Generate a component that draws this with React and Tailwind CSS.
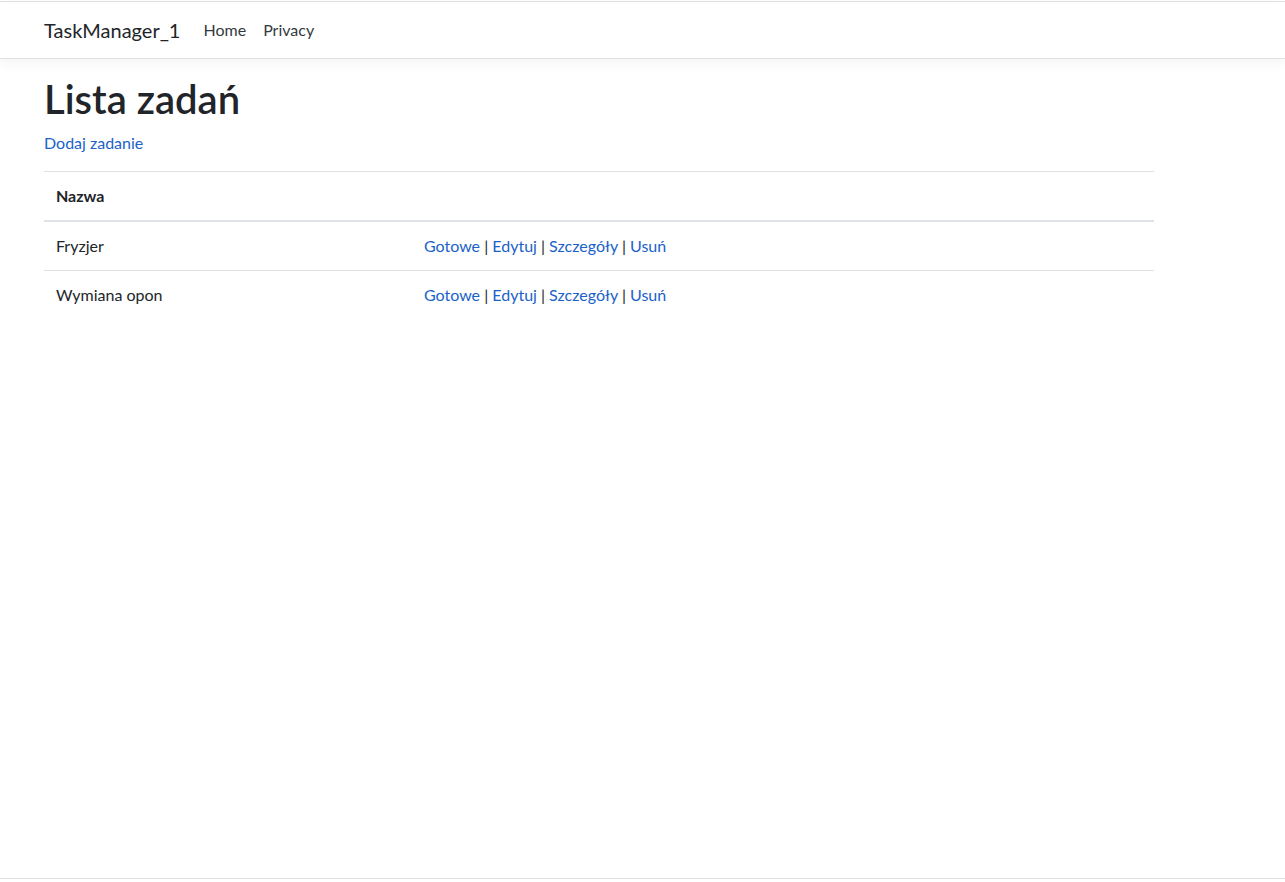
import React from "react";

const rows = ["Fryzjer", "Wymiana opon"];

function Actions() {
  const links = ["Gotowe", "Edytuj", "Szczegóły", "Usuń"];
  return (
    <span>
      {links.map((l, i) => (
        <React.Fragment key={l}>
          <a href="#" className="text-[#1a62c9] hover:underline">{l}</a>
          {i < links.length - 1 && <span> | </span>}
        </React.Fragment>
      ))}
    </span>
  );
}

export default function App() {
  return (
    <div
      className="min-h-screen flex flex-col bg-white text-[#212529] text-[16px] leading-[1.5]"
      style={{ fontFamily: '"Segoe UI", Lato, "Open Sans", sans-serif' }}
    >
      <div className="h-px bg-white" />
      <header className="border-t border-b border-[#dee2e6] bg-white shadow-[0_4px_12px_rgba(0,0,0,0.05)] mb-4">
        <nav className="h-[56px] flex items-center px-[44px]">
          <a href="#" className="text-[20px] leading-[30px] text-[#212529] mr-[23px]">TaskManager_1</a>
          <a href="#" className="text-[#343a40] mr-[17px]">Home</a>
          <a href="#" className="text-[#343a40]">Privacy</a>
        </nav>
      </header>
      <main className="flex-1 px-[44px]">
        <div className="w-[1110px]">
          <h1 className="text-[40px] leading-[48px] font-semibold mb-2">Lista zadań</h1>
          <p className="mb-4">
            <a href="#" className="text-[#1a62c9]">Dodaj zadanie</a>
          </p>
          <table className="w-full border-collapse table-fixed">
            <colgroup>
              <col className="w-[368px]" />
              <col />
            </colgroup>
            <thead>
              <tr className="border-t border-[#dee2e6]">
                <th className="text-left font-bold p-3 border-b-2 border-[#dee2e6]">Nazwa</th>
                <th className="p-3 border-b-2 border-[#dee2e6]"></th>
              </tr>
            </thead>
            <tbody>
              {rows.map((r, i) => (
                <tr key={r} className={i > 0 ? "border-t border-[#dee2e6]" : ""}>
                  <td className="p-3">{r}</td>
                  <td className="p-3"><Actions /></td>
                </tr>
              ))}
            </tbody>
          </table>
        </div>
      </main>
      <footer className="h-[4px] border-t border-[#dee2e6]" />
    </div>
  );
}
